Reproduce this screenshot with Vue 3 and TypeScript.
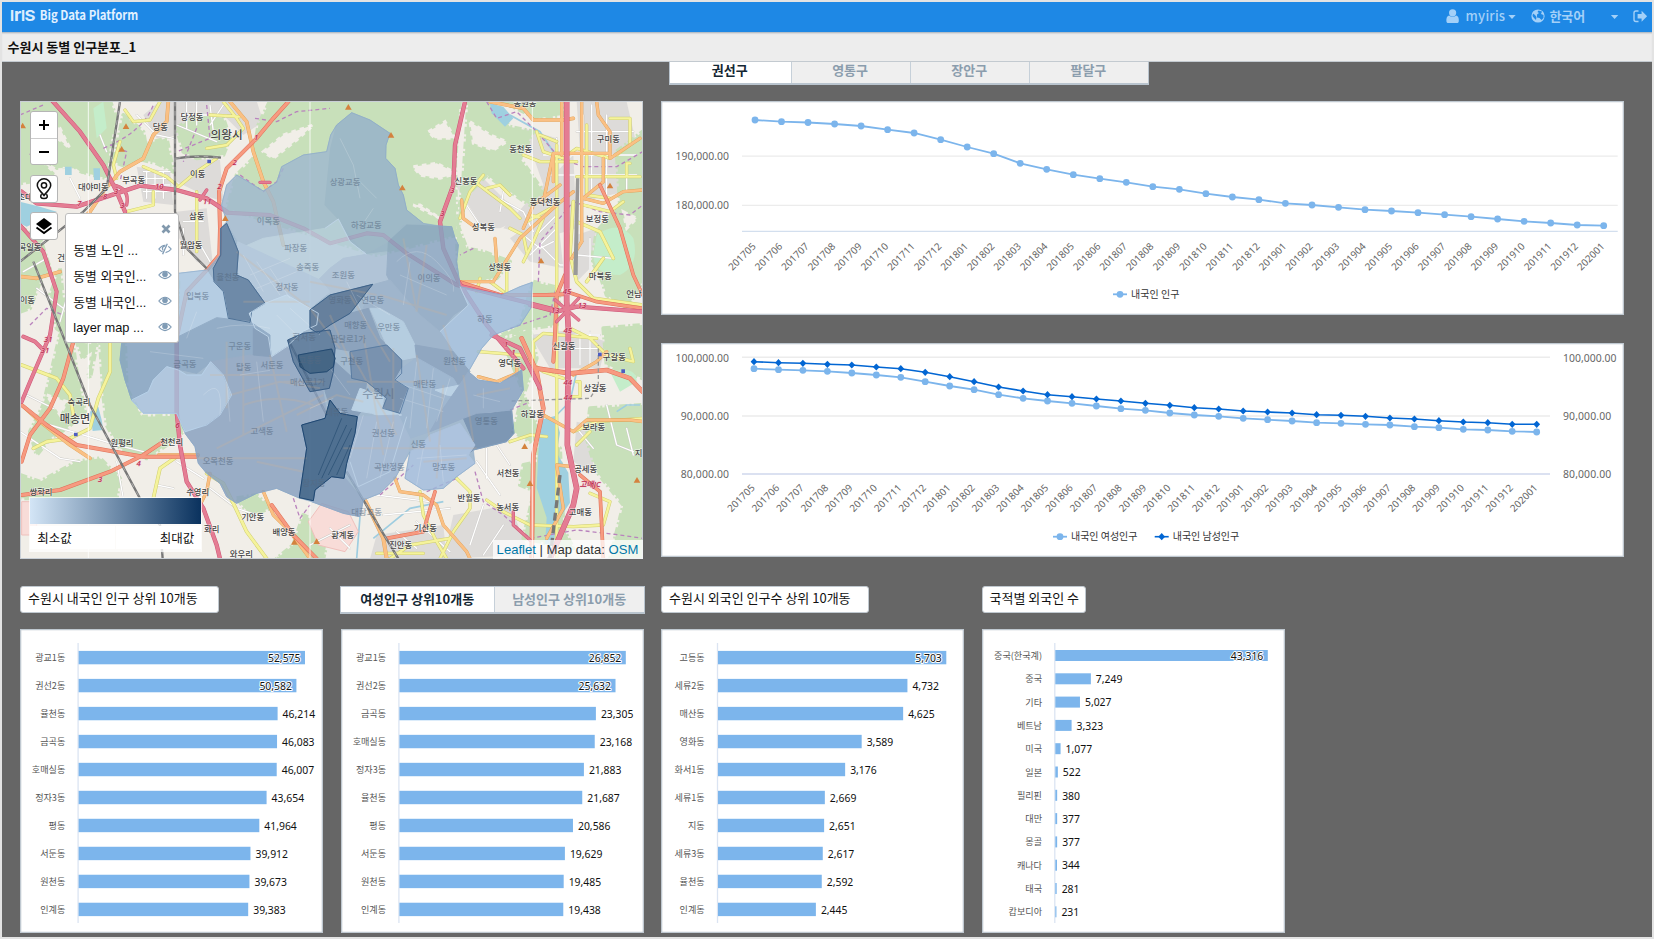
<script setup lang="ts">
interface Pt { x: number; y: number }
interface Bar { label: string; value: number }
interface Panel { bars: Bar[]; axis: number; full: number; top: number; pitch: number; thick: number }
interface Road { d: string; w: number }
interface MapLabel { t: string; x: number; y: number; s?: number }

/* ---------- line charts ---------- */
const months: string[] = []
for (let i = 0; i < 33; i++) {
  const m = 4 + i
  months.push(`${2017 + Math.floor(m / 12)}${String((m % 12) + 1).padStart(2, '0')}`)
}
const spread = (ys: number[], x0: number, x1: number): Pt[] =>
  ys.map((y, i) => ({ x: +(x0 + ((x1 - x0) * i) / (ys.length - 1)).toFixed(1), y }))
const toLine = (p: Pt[]): string => p.map(q => `${q.x},${q.y}`).join(' ')

const total = spread([
  19, 20.7, 21.5, 23, 25, 28.7, 32, 38.7, 46, 52.7, 62.3, 68.3, 73.7, 77.7, 81.3, 85.7, 88.3, 92.7, 96,
  98.7, 102.3, 104, 106.3, 108.7, 110, 111.7, 113.7, 115.7, 118, 120.3, 122, 124, 124.7,
], 94, 942.7)
const female = spread([
  101, 104, 106, 109, 114, 120, 127, 140, 153, 164, 179, 190, 198, 205, 213, 221, 226, 234, 240, 244, 250,
  254, 258, 263, 265, 268, 270, 275, 278, 283, 285, 289, 291,
].map(v => +(v / 3 - 8).toFixed(1)), 93, 875.7)
const male = spread([
  80, 83, 85, 88, 90, 96, 101, 112, 125, 140, 156, 168, 179, 185, 192, 198, 205, 211, 218, 222, 228, 231,
  234, 239, 241, 244, 249, 252, 257, 261, 263, 268, 268,
].map(v => +(v / 3 - 8).toFixed(1)), 93, 875.7)
const diamond = (p: Pt): string => `M${p.x} ${p.y - 3.6}l3.4 3.6-3.4 3.6-3.4-3.6z`

/* ---------- bar charts ---------- */
const mk = (names: string, values: number[]): Bar[] =>
  names.split(' ').map((label, i) => ({ label, value: values[i] }))
const panels: Panel[] = [
  { axis: 58.6, full: 226.4, top: 21.9, pitch: 27.98, thick: 13.4,
    bars: mk('광교1동 권선2동 율천동 금곡동 호매실동 정자3동 평동 서둔동 원천동 인계동',
      [52575, 50582, 46214, 46083, 46007, 43654, 41964, 39912, 39673, 39383]) },
  { axis: 58.4, full: 226.4, top: 21.9, pitch: 27.98, thick: 13.4,
    bars: mk('광교1동 권선2동 금곡동 호매실동 정자3동 율천동 평동 서둔동 원천동 인계동',
      [26852, 25632, 23305, 23168, 21883, 21687, 20586, 19629, 19485, 19438]) },
  { axis: 57, full: 228.3, top: 21.9, pitch: 27.98, thick: 13.4,
    bars: mk('고등동 세류2동 매산동 영화동 화서1동 세류1동 지동 세류3동 율천동 인계동',
      [5703, 4732, 4625, 3589, 3176, 2669, 2651, 2617, 2592, 2445]) },
  { axis: 73.3, full: 212.5, top: 21, pitch: 23.3, thick: 11,
    bars: mk('중국(한국계) 중국 기타 베트남 미국 일본 필리핀 대만 몽골 캐나다 태국 캄보디아',
      [43316, 7249, 5027, 3323, 1077, 522, 380, 377, 377, 344, 281, 231]) },
]
const barW = (p: Panel, b: Bar): number => (p.full * b.value) / p.bars[0].value
const inside = (p: Panel, b: Bar): boolean => p.axis + barW(p, b) > 270
const fmt = (n: number): string => n.toLocaleString('en-US')

/* ---------- map ---------- */
const city = 'M1025 53L1080 75 1140 115 1128 150 1127 190 1155 220 1165 270 1180 300 1190 345 1240 385 1290 393 1325 395 1335 430 1345 450 1340 500 1350 575 1475 600 1530 575 1567 562 1562 640 1530 690 1450 720 1415 760 1375 830 1405 855 1470 865 1535 825 1540 885 1505 945 1512 1015 1490 1040 1390 1065 1395 1105 1340 1145 1300 1180 1240 1185 1185 1150 1200 1070 1155 1150 1110 1195 1060 1215 1050 1265 1000 1255 905 1220 870 1210 800 1180 740 1195 680 1225 650 1205 630 1165 590 1135 565 1105 555 1055 525 1015 500 955 400 955 365 915 345 855 330 795 335 745 400 640 505 535 590 525 630 480 632 400 650 380 635 330 650 270 680 240 760 288 800 262 815 215 880 180 950 170 962 120 980 90z'
const forests = [
  'M30 18H300L320 70 300 150 290 250 230 235 160 215 120 250 30 265z',
  'M340 60L400 110 410 170 350 215 310 200z M392 150L470 130 490 230 440 205 380 190z',
  'M560 60L640 70 660 130 640 180 560 190 520 170 500 100z',
  'M780 18H1350L1335 200 1340 420 1100 480 650 340 680 240 730 190 745 90z',
  'M1375 18H1440L1500 95 1570 110 1550 150 1530 190 1600 290 1560 330 1500 290 1430 240 1372 300 1345 395 1370 460 1420 470 1500 500 1460 550 1345 560 1340 400 1360 250z',
  'M1470 18H1660V60L1580 70 1520 40z M1820 170L1898 110V560L1850 640 1790 600 1770 540 1745 500 1760 410 1830 330z',
  'M1570 560L1650 580 1640 690 1560 700 1460 730 1530 690z M1480 740L1560 700 1580 790 1540 900 1590 1010 1560 1040 1510 1010 1540 890z',
  'M270 740L345 740 350 880 395 965 500 962 520 1010 470 1050 410 1090 330 1060 290 990 280 900z',
  'M150 720H185L200 830 225 950 170 1000 120 1030 80 1080 60 1010 100 930z M200 740L260 750 240 850z',
  'M30 1140L90 1160 200 1100 270 1090 330 1150 320 1210H30z M470 600V520L505 560 500 720z',
  'M1590 1010L1650 1060 1660 1300 1690 1360 1540 1330 1570 1200z M1740 940L1898 930V1391H1800L1840 1230 1760 1130 1730 1030z',
  'M30 395L90 430 120 520 90 560 60 640 30 650z M150 520L170 720 140 700 120 600z M1780 700L1898 690V850L1790 810z',
  'M850 1350L880 1260 960 1300 940 1391H800z M680 1210L740 1200 780 1240 720 1260z M1540 1110L1590 1100 1580 1190 1530 1170z',
]
const valleys = [
  'M100 200l40 25 50-5 40 30 30 50-60-10-50-40z', 'M80 60l70 40 30 60-50-40z',
  'M760 170l60-50 90-30-50 45-70 55z', 'M1380 80l60 40 50 20-40 25-60-20z',
  'M1210 215l70-10 60 30-50 15-60-10z', 'M1255 110l50-30 30 50-60 0z', 'M1290 370l-80-40 20 0z',
  'M210 800l30-20-10 60z', 'M110 900l60 20-20 40z', 'M1840 350l40 20-30 30z',
]
const urban = [
  'M450 18H740L760 80 700 120 640 60 560 150 510 120 440 130 400 60z', 'M380 215L480 230 490 330 400 320z',
  'M500 190L630 195 640 320 580 300 500 260z', 'M500 350L590 340 610 520 560 500 500 420z',
  'M1540 100L1640 130 1650 240 1600 270z', 'M1570 300L1690 180 1700 400 1600 430 1480 400z',
  'M1700 20H1850L1880 150 1840 290 1720 320z', 'M1500 430L1640 330 1660 520 1560 500z',
  'M1330 260L1420 250 1540 370 1470 400 1420 400z', 'M1560 720L1680 705 1790 740 1770 820 1620 820z',
  'M1330 1260L1500 1230 1560 1380 1300 1391z', 'M1100 1320L1300 1290 1310 1391H1080z',
  'M1700 420L1760 400 1740 520 1700 560z', 'M1700 980L1790 1000 1740 1130 1690 1100z',
]
const water = [
  'M1590 975l45-12 15 50-10 60 35 60 5 90-40 60-10 65h-25l5-80-30-90z', 'M30 320l60 15 50 15-90 45-20-10z',
  'M240 950l25-15 10 40 5 30-32 3z', 'M1440 25l40 10 30 35-25 25-40-40z', 'M165 215h20v25h-20z M250 220h20v35h-18z',
]
const minor = [
  'M380 60l60 60 50 10 M400 230h80 M400 250h80 M400 270h80 M400 290h80 M410 230v80 M435 230v80 M460 230v80',
  'M510 60h140 M530 20v80 M560 20v70 M500 90l120 50 M600 30l10 80 M640 30l-40 60 M520 380h60 M520 400v80 M560 380v80',
  'M1600 180h280 M1720 60v240 M1745 30v260 M1790 60v240 M1700 110h170 M1620 240h260 M1640 130v140 M1850 210v80',
  'M1430 290l110 60 30 60 M1480 290l-10 60 M1540 420l50 40 40-20 M1370 330l40 60 M1580 420l60-60 M1560 480l80-80',
  'M1590 450l60 60h50 M1700 480l110 10 M1740 430v100 M1640 720h130 M1650 760h120 M1710 710v100 M1740 710v100',
  'M50 900l80 40 M30 1010l120 80 60 10 M120 990l200 60 80 20 M320 1100l20 110 M440 1170l50 10 M500 1100l80 50 M600 1180l80 60 60 20',
  'M1100 1200l160 20 M1120 1260l200-20 M1430 1060v90 M1400 1100l70 100 M1460 1050l40 60 M1420 1230l-40 120 M1480 1290l-60 90',
  'M1160 1310l60 50 M1220 1280l100 90 M900 1350l120-60 M960 1300l60 60 M1700 1000l50 60 M1790 930l30 120 50 20 M1850 1000l20 80',
  'M270 120l20 50 M560 430l40 70 M180 250l30 60 M200 500l-50 180 M80 580l80 60 M40 530l70-40',
]
const innerRoads = [
  'M680 470L900 640 990 760 M700 620h200 M600 840h240 M650 740v200 M700 760v260 M780 780L830 1010 M620 1060L940 900 M560 1090h330',
  'M1020 770L1160 1020 M1010 860h240 M1060 720l60 360 M1150 760v260 M1220 780l40 260 M1000 1060h400 M1300 870l-20 280 M1360 840l30 200',
  'M1110 600l200 60 M1180 430l40 220 M1250 450l-30 200 M1020 600l120 200 M1300 690l40 140 M900 560l200 40 M960 660l60 140 M820 860l120 0',
  'M860 960l120-60 80 20 M700 930c80-30 150-20 210 0 M660 900l150-40 120 20 M740 1100l140 30 M1400 900l100-20 M1240 1100l130-10',
]
const lanes = [
  'M700 480l60 110M740 500l70 100M780 520l60 90M720 540l120-50M740 580l120-50M650 860l10 120M740 800l20 180M690 840l90-14',
  'M1060 960l-40 130M1100 980l-30 170M1150 980l-40 170M1240 1060l-20 110M1290 1050l10 110M1220 1090l150-10M1220 800l-20 200',
  'M1270 820l-20 180M1320 850l-40 130M1180 870l120 40M1170 910l130 40M1160 500q60-60 120 0t50 90M1170 540l140 60M1200 500l-20 130',
  'M620 700q80-20 160 0M420 770l160 20M560 650l-30 80M580 900q60-60 50 60M1010 560l60 120M1040 600l100 60M1390 900l80 20M1420 880v60',
  'M840 640l90 80M800 660l60 60M960 820l60 80M900 940l70-30M990 130l40 80 20 100M1040 250l60 60M1090 340l-40 60',
]
const yellow: Road[] = [
  { d: 'M345 45L370 80 420 75 450 20 M330 140L310 210 320 250 M400 215L470 245 500 270', w: 8 },
  { d: 'M640 20L680 70 700 100 650 150 590 160 M600 60L690 65 M560 290V470 M500 280L560 230 620 190 M350 350L430 330 430 290', w: 8 },
  { d: 'M300 745L300 830 265 910 240 1000 180 1030 110 1040 70 1060 M35 810L140 850 180 900 190 960', w: 9 },
  { d: 'M500 1085L450 1120 430 1210 M590 1135L640 1165 670 1225 710 1310 770 1391', w: 9 },
  { d: 'M1580 110L1600 170 1660 190 1700 160 1800 190 M1540 180L1590 200H1700 M1640 150V260 1590 310 M1590 120L1640 140', w: 8 },
  { d: 'M1700 245H1890 M1850 240V205H1860 M1800 70H1860V150L1820 180 M1730 90V300L1800 310 M1720 330L1800 350 1840 320', w: 8 },
  { d: 'M1350 370L1380 290 1420 240 M1400 265L1500 340 1530 370 M1500 300L1470 270 1430 280 M1500 400L1540 420 1550 470', w: 8 },
  { d: 'M1550 380L1640 330 M1540 500L1570 440 1600 370 1560 360 M1490 520V590 M1410 550L1400 590 M1440 560L1480 590', w: 8 },
  { d: 'M1690 320L1680 480 1700 560 1750 610 1898 630 M1700 380L1770 410 1810 490 M1730 560L1780 490', w: 9 },
  { d: 'M1405 770L1530 780 1600 830 1660 850 M1570 810V740L1600 715 1760 730 M1680 700L1740 730 1790 780 1870 800 1860 760', w: 8 },
  { d: 'M1700 860H1710V905H1685 M1690 1010L1760 980 1898 970 M1700 1050L1740 1010 M1500 1040L1560 1020 1610 1025', w: 8 },
  { d: 'M1340 1150L1380 1190 1380 1240 1330 1310 1290 1391 M1430 1215L1480 1250 1560 1290 1690 1295 1780 1290 1800 1220 1740 1195', w: 8 },
  { d: 'M1230 1190L1240 1260 1280 1340 1310 1391 M1140 1391L1200 1350 1320 1330 M1100 1375H1240', w: 8 },
]
const orange: Road[] = [
  { d: 'M475 20L470 80 430 120 400 190 330 230 280 290 240 350 180 410', w: 10 },
  { d: 'M660 20L710 80 730 170 760 260 790 320 820 450', w: 10 },
  { d: 'M35 545L80 550 150 530 M35 930L90 980 180 1050 240 1090', w: 10 },
  { d: 'M445 1080H565 M600 1135L590 1190 570 1230 M760 1190L790 1260 840 1310 900 1391', w: 9 },
  { d: 'M1065 1215L1120 1330 1130 1391', w: 11 },
  { d: 'M1155 1150L1170 1190 1240 1200 1280 1230 1300 1290 1370 1370 1380 1391', w: 9 },
  { d: 'M1440 20L1540 40 1570 75 1660 75 1690 70', w: 10 },
  { d: 'M1655 20V180 M1715 20V440 M1760 20L1765 60 1800 110V190L1890 130 M1630 175H1800 M1630 175L1600 320', w: 9 },
  { d: 'M1780 190V260L1720 310 1780 325 1840 290 1898 285 M1630 180V260 M1690 290L1640 330 1530 430 1450 560 1348 560', w: 9 },
  { d: 'M1355 315L1360 370 1400 400 M1540 400L1570 330 1650 270 M1460 500L1455 430 M1715 440L1685 490', w: 9 },
  { d: 'M1405 845L1460 860 1520 835V815 M1600 960L1690 1010 1730 975 1860 975 1898 980', w: 9 },
  { d: 'M1690 1115L1640 1110 1660 1240 1610 1330 M1690 840L1760 800 1790 770', w: 9 },
]
const trunk: Road[] = [
  { d: 'M835 20L790 70 740 130 650 220 627 290 630 400 628 480 595 520 530 590 500 730', w: 11 },
  { d: 'M35 1100L60 1020 120 940 160 850 190 740 M35 930L110 990 200 1050 400 1085H560', w: 11 },
  { d: 'M35 1200L150 1185 300 1130 400 1080 460 1040 M785 1230L850 1320 920 1391', w: 11 },
  { d: 'M1345 560L1470 600 1610 600 1660 598 M1665 540L1640 600 1635 720 1630 800', w: 11 },
  { d: 'M1535 730L1580 830 1600 940 1570 1080 1565 1391 M1580 820L1680 835 1790 825 1860 850 1898 890', w: 13 },
  { d: 'M1770 270L1830 400 1870 540 1898 600 M1275 1190L1240 1310 1130 1330', w: 10 },
  { d: 'M1710 1140L1770 1190 1780 1391 M1670 590L1760 620 1898 640', w: 10 },
]
const motorway: Road[] = [
  { d: 'M125 15L210 110 280 210 320 290 345 350 M35 290L80 325 200 335 320 295 390 272 500 285 590 310 650 350', w: 13 },
  { d: 'M650 353L780 360 880 400 960 445 1070 415 1120 420 1190 475 1340 570 1420 590 1640 645', w: 12 },
  { d: 'M1365 20L1335 150 1330 270 1290 380 1300 460 1345 560 1430 690 1540 820', w: 13 },
  { d: 'M30 390L100 470 140 590 120 720 60 860 35 920 M40 725L75 740 100 765', w: 12 },
  { d: 'M500 720L500 950 510 1050 530 1160 580 1240 620 1350 630 1391', w: 13 },
  { d: 'M1670 20V620L1675 700 1672 1050 1700 1180 1690 1230 1620 1391', w: 17 },
  { d: 'M1560 630L1640 650 1700 635 1898 650 M1445 720L1530 760 1590 880', w: 13 },
  { d: 'M1510 1250V1290L1560 1335 M1636 615l70 60 M1706 610l-66 70 M570 315l20-30 M310 270q50 10 40 60 M750 262h30', w: 10 },
]
const rail = [
  'M330 20L290 280 220 350 30 500', 'M495 20V350L530 460 590 520', 'M498 190q60-10 135-2',
  'M70 500L150 700 240 930 395 1220 450 1290 458 1391', 'M1010 1130L1110 1300 1165 1391', 'M835 735L950 960',
]
const boundaries = [
  'M30 60L100 30 M60 180L90 100 120 90 M300 150L350 170 330 260 M280 160q120-50 150-130 M590 30L600 130 500 170 M560 100L520 200',
  'M735 70L800 80 860 50 960 40 M1430 20L1460 70 1520 50 1580 110 1650 190 1720 215 1820 215 1898 170',
  'M1585 560L1590 440 1640 380 1690 320 1770 350 1860 360 1898 330 M1390 460L1350 480 M1500 700L1560 680 1620 660 1640 570',
  'M820 220L800 260 760 290 690 240 M1395 1130L1420 1220 1480 1260 1560 1330 1700 1305 1830 1320 1898 1330 M1500 945l50-20',
  'M850 1210L870 1270 900 1230 M1110 1200l100-90 M1250 1190l90-40 M60 690L110 640 160 660',
]
const districts: { d: string; f: string }[] = [
  { f: '#9fb8cf', d: 'M635 330L650 270 680 240 760 288 800 262 815 215 880 180 950 170 962 120 980 90 1000 370 900 430 690 450 650 380z' },
  { f: '#96b1ca', d: 'M962 160L980 90 1025 53 1080 75 1140 115 1128 150 1127 190 1155 220 1165 270 1180 300 1190 345 1240 385 1180 390 1135 440 1065 478 985 372 945 330z' },
  { f: '#b2cbdc', d: 'M945 400L985 372 1020 440 1069 478 1000 490 960 520 930 560 690 460 760 430z' },
  { f: '#a3bcd4', d: 'M960 520L1000 490 1069 478 1135 470 1140 560 1085 570 960 600 900 580z' },
  { f: '#a9c2da', d: 'M683 440L930 555 960 590 900 640 850 610 765 625 715 555 680 540z' },
  { f: '#52759a', d: 'M650 385L665 420 685 470 680 540 715 555 765 625 725 650 720 682 655 670 640 590 612 560 610 520 632 480 632 400z' },
  { f: '#b6d0e6', d: 'M718 655L765 625 830 600 925 655 920 690 880 708 830 755 785 785 775 725 735 700z' },
  { f: '#86a3c1', d: 'M1135 440L1190 390 1325 395 1335 430 1345 450 1340 500 1350 570 1375 630 1330 660 1290 710 1230 660 1160 600 1130 540z' },
  { f: '#9bbadb', d: 'M1350 575L1475 600 1530 575 1567 562 1562 640 1530 690 1450 720 1415 760 1375 830 1330 770 1290 710 1375 630z' },
  { f: '#a9c6e2', d: 'M400 640L505 535 590 525 612 560 640 590 655 670 600 690 560 735 335 750z' },
  { f: '#7f9fc0', d: 'M335 745L505 725 620 668 720 680 780 720 780 785 720 790 605 800 560 835 470 815 430 860 415 900 365 915 345 855 330 795z' },
  { f: '#a3bfdc', d: 'M470 815L505 825 530 840 575 840 602 800 640 840 665 900 630 960 590 990 525 1010 500 955 400 955 365 915 415 890 430 855z' },
  { f: '#869fbf', d: 'M602 800L720 780 785 785 830 755 870 800 930 830 950 960 900 985 890 1060 870 1210 800 1180 740 1195 680 1225 650 1205 630 1165 590 1135 565 1105 555 1055 525 1015 590 990 630 960 665 900 640 840z' },
  { f: '#7290b2', d: 'M730 700L775 725 785 785 730 780z M945 888L975 800 1030 850 1070 860 1060 940 1042 965 960 935z' },
  { f: '#8ea9c6', d: 'M1085 570L1140 555 1230 660 1290 710 1330 770 1215 750 1180 680 1110 640 1060 640z' },
  { f: '#7693b4', d: 'M920 710L1020 655 1075 640 1110 730 1130 750 1030 770 975 760z' },
  { f: '#a9c6df', d: 'M1080 640L1110 640 1180 680 1215 750 1225 785 1175 795 1130 750z' },
  { f: '#48698d', d: 'M900 645L960 600 1088 568 1020 655 960 690 925 715 900 700z' },
  { f: '#496c92', d: 'M833 735L880 715 960 705 975 760 970 830 958 880 900 890 850 800z' },
  { f: '#204970', d: 'M865 780L920 770 965 762 975 790 970 815 950 830 900 835 870 815z' },
  { f: '#5f7fa3', d: 'M1020 770L1130 750 1175 795 1175 835 1155 855 1195 880 1170 955 1118 940 1130 910 1070 860 1025 850z' },
  { f: '#7b98b9', d: 'M1215 750L1330 770 1380 830 1345 870 1300 850 1220 790z' },
  { f: '#8eabcb', d: 'M1175 820L1220 788 1330 850 1345 875 1300 960 1260 1010 1200 1030 1165 960 1195 880 1155 855z' },
  { f: '#b0cce5', d: 'M1025 945L1050 880 1080 890 1120 905 1118 940 1175 960 1130 970 1085 955z M1275 885L1350 870 1345 905 1310 900z' },
  { f: '#6484a9', d: 'M1360 970L1400 955 1440 955 1505 945 1512 1015 1490 1040 1390 1065 1370 1080 1395 1050z' },
  { f: '#839fc1', d: 'M1375 830L1405 855 1470 865 1535 825 1540 885 1505 945 1400 955 1360 970 1260 1010 1300 940 1345 875z' },
  { f: '#9fbadc', d: 'M1185 1150L1200 1070 1230 1055 1260 1020 1350 985 1395 1050 1375 1080 1395 1105 1340 1145 1300 1180 1240 1185z' },
  { f: '#96b1d0', d: 'M1042 965L1165 960 1200 1030 1195 1070 1155 1150 1110 1195 1060 1215 1010 1130z' },
  { f: '#86a1c2', d: 'M1002 1145L1060 1215 1050 1265 1000 1255 905 1220 910 1190 960 1145z' },
  { f: '#2c557e', d: 'M875 990L945 970 960 915 990 955 1042 965 1035 1015 1010 1105 1002 1150 965 1145 915 1185 910 1217 868 1208 890 1060z' },
]
const outer: MapLabel[] = [
  { t: '당정동', x: 546, y: 67 }, { t: '당동', x: 451, y: 96 }, { t: '의왕시', x: 650, y: 120, s: 35 },
  { t: '이동', x: 563, y: 237 }, { t: '부곡동', x: 371, y: 256 }, { t: '대야미동', x: 250, y: 275 },
  { t: '초대', x: 45, y: 306 }, { t: '삼동', x: 560, y: 362 }, { t: '월암동', x: 543, y: 449 },
  { t: '곡일동', x: 60, y: 457 }, { t: '건', x: 153, y: 490 }, { t: '이동', x: 52, y: 616 },
  { t: '동원동', x: 1545, y: 25 }, { t: '동천동', x: 1532, y: 162 }, { t: '구미동', x: 1795, y: 132 },
  { t: '신봉동', x: 1368, y: 258 }, { t: '풍덕천동', x: 1605, y: 320 }, { t: '성복동', x: 1420, y: 396 },
  { t: '상현동', x: 1469, y: 517 }, { t: '보정동', x: 1762, y: 371 }, { t: '마북동', x: 1771, y: 544 },
  { t: '언남', x: 1872, y: 598 }, { t: '신갈동', x: 1662, y: 752 }, { t: '구갈동', x: 1813, y: 786 },
  { t: '영덕동', x: 1499, y: 803 }, { t: '상갈동', x: 1755, y: 880 }, { t: '하갈동', x: 1567, y: 958 },
  { t: '보라동', x: 1751, y: 997 }, { t: '지', x: 1886, y: 1073 }, { t: '서천동', x: 1494, y: 1134 },
  { t: '공세동', x: 1727, y: 1122 }, { t: '고매동', x: 1711, y: 1250 }, { t: '농서동', x: 1493, y: 1237 },
  { t: '반월동', x: 1377, y: 1210 }, { t: '기산동', x: 1246, y: 1300 }, { t: '진안동', x: 1172, y: 1350 },
  { t: '황계동', x: 998, y: 1321 }, { t: '숙곡리', x: 207, y: 921 }, { t: '매송면', x: 195, y: 972, s: 33 },
  { t: '원평리', x: 336, y: 1044 }, { t: '천천리', x: 485, y: 1040 }, { t: '쌍학리', x: 93, y: 1191 },
  { t: '수영리', x: 563, y: 1191 }, { t: '기안동', x: 728, y: 1267 }, { t: '배양동', x: 822, y: 1311 },
  { t: '와우리', x: 694, y: 1377 }, { t: '화리', x: 605, y: 1303 },
]
const inner: MapLabel[] = [
  { t: '이목동', x: 775, y: 379 }, { t: '파장동', x: 857, y: 458 }, { t: '송죽동', x: 893, y: 516 },
  { t: '율천동', x: 654, y: 546 }, { t: '입북동', x: 563, y: 603 }, { t: '정자동', x: 831, y: 576 },
  { t: '상광교동', x: 1005, y: 262 }, { t: '하광교동', x: 1069, y: 390 }, { t: '조원동', x: 1000, y: 540 },
  { t: '이의동', x: 1257, y: 550 }, { t: '영화동', x: 990, y: 614 }, { t: '연무동', x: 1088, y: 616 },
  { t: '매향동', x: 1037, y: 690 }, { t: '우만동', x: 1136, y: 695 }, { t: '하동', x: 1425, y: 672 },
  { t: '구운동', x: 689, y: 752 }, { t: '화서동', x: 883, y: 726 }, { t: '금곡동', x: 525, y: 806 },
  { t: '탑동', x: 701, y: 815 }, { t: '서둔동', x: 786, y: 810 }, { t: '고등동', x: 900, y: 796 },
  { t: '매산로1가', x: 893, y: 862 }, { t: '고색동', x: 756, y: 1008 }, { t: '오목천동', x: 624, y: 1098 },
  { t: '장지동', x: 912, y: 1164 }, { t: '팔달로1가', x: 1015, y: 732 }, { t: '구천동', x: 1025, y: 798 },
  { t: '원천동', x: 1334, y: 798 }, { t: '매탄동', x: 1244, y: 868 }, { t: '수원시', x: 1105, y: 897, s: 35 },
  { t: '세류동', x: 980, y: 952 }, { t: '권선동', x: 1120, y: 1015 }, { t: '신동', x: 1225, y: 1047 },
  { t: '영통동', x: 1429, y: 978 }, { t: '망포동', x: 1301, y: 1115 }, { t: '곡반정동', x: 1138, y: 1117 },
  { t: '대황교동', x: 1070, y: 1250 },
]
const shields: MapLabel[] = [
  { t: '10', x: 448, y: 273 }, { t: '11', x: 592, y: 320 }, { t: '7', x: 208, y: 325 }, { t: '8', x: 285, y: 305 },
  { t: '3', x: 318, y: 288 }, { t: '3', x: 337, y: 330 }, { t: '2', x: 674, y: 203 }, { t: '2', x: 628, y: 275 },
  { t: '1', x: 738, y: 128 }, { t: '3', x: 1327, y: 285 }, { t: '3', x: 1297, y: 355 }, { t: '45', x: 1671, y: 590 },
  { t: '13', x: 1636, y: 645 }, { t: '13', x: 1716, y: 632 }, { t: '45', x: 1673, y: 707 }, { t: '31', x: 115, y: 732 },
  { t: '31', x: 105, y: 767 }, { t: '6', x: 502, y: 990 }, { t: '4', x: 386, y: 1104 }, { t: '3', x: 270, y: 1154 },
  { t: '1', x: 1488, y: 748 }, { t: '1', x: 1510, y: 773 }, { t: '44', x: 1673, y: 861 }, { t: '44', x: 1674, y: 906 },
  { t: '고매JC', x: 1740, y: 1168 },
]
const peaks = [[348, 94], [335, 162], [38, 92], [1015, 36], [1143, 120], [1177, 278], [646, 370], [1800, 272],
  [1593, 497], [1544, 1054], [1560, 1165], [1881, 1155], [853, 1341], [920, 1339]]
const layers = [
  { name: '동별 노인 ...', off: true }, { name: '동별 외국인...', off: false },
  { name: '동별 내국인...', off: false }, { name: 'layer map ...', off: false },
]
const tabs = ['권선구', '영통구', '장안구', '팔달구']
</script>

<template>
  <div class="app">
    <header class="top">
      <svg class="brand" width="140" height="30" viewBox="0 0 140 30">
        <text y="18.500" class="logo"><tspan x="8">I</tspan><tspan x="12" font-size="18">r</tspan><tspan x="19">I</tspan></text>
        <text x="22.600" y="18.500" class="logo" textLength="11" lengthAdjust="spacingAndGlyphs">S</text>
        <text x="37.700" y="18" class="product" textLength="98.500" lengthAdjust="spacingAndGlyphs">Big Data Platform</text>
      </svg>
      <svg class="account" width="210" height="30" viewBox="1442 2 210 30">
        <g fill="#a3d0f8">
          <circle cx="1452.6" cy="12.8" r="3.6" />
          <path d="M1449 15.6c-2.200.5-2.800 3-2.600 5.600.100 1.300.9 1.900 2 1.900h8.400c1.100 0 1.900-.6 2-1.900.200-2.600-.4-5.100-2.600-5.600-2 1.600-5.200 1.600-7.200 0z" />
          <path d="M1508.300 15h7.400l-3.700 3.900zM1610.900 15h7.400l-3.700 3.900z" />
          <circle cx="1538" cy="16" r="6.600" />
          <text x="1465.600" y="20.600" textLength="39.500">myiris</text>
          <text x="1549.600" y="20.600" textLength="35.500" class="strong">한국어</text>
        </g>
        <path d="M1538.500 10.500l3.500 1-1 2.500 2.500 1v3l-2 2-2-2-2.500-.5v-3l2-1.500-1.500-1zM1533 13.500l2 1.500 1.500 2-.5 3-2-2-1.500-2z" fill="#1e88e5" />
        <g fill="none" stroke="#a3d0f8" stroke-width="1.400">
          <path d="M1638.500 11h-2.500q-2 0-2 2v6.500q0 2 2 2h2.500" />
        </g>
        <path d="M1637.600 14h4v-3.300l5.500 5.500-5.500 5.500v-3.300h-4z" fill="#a3d0f8" />
      </svg>
    </header>
    <div class="title">수원시 동별 인구분포_1</div>

    <main class="board">
      <nav class="tabs">
        <span v-for="(t, i) in tabs" :key="t" class="tab" :class="{ on: i === 0 }">{{ t }}</span>
      </nav>

      <section class="row">
        <div class="map">
          <svg width="623" height="458" viewBox="30 18 1869 1374">
            <rect x="30" y="18" width="1869" height="1374" fill="#f1eee8" />
            <path v-for="d in urban" :key="d" :d="d" fill="#dddbd9" />
            <path v-for="d in forests" :key="d" :d="d" fill="#c8e0ba" stroke="#c8e0ba" stroke-width="12" stroke-linejoin="round" stroke-dasharray="22 9 6 7" />
            <path v-for="d in valleys" :key="d" :d="d" fill="#f1eee8" stroke="#f1eee8" stroke-width="9" stroke-dasharray="14 12" />
            <path d="M1760 420q70-50 110 10 20 80-40 110-80 0-80-60zM1800 830q80-20 80 30l-50 30zM250 40l30-20 10 80-30 30z" fill="#c4edca" />
            <path v-for="d in water" :key="d" :d="d" fill="#9fd0e0" />
            <g fill="none" stroke="#9ecde0" stroke-width="5">
              <path d="M1050 1265L1040 1391M1090 1330L1200 1240 1300 1220M1700 830L1680 920 1640 960M1820 950l30-20 40 0M1500 60l90 50 60 90" />
            </g>
            <path d="M935 1225l80 25 30 60-40 60-80-20-30-70zM35 1220h45v100H35z" fill="#f8dcd8" stroke="#efc0bc" stroke-width="3" />
            <g fill="none" stroke-linejoin="round" stroke-linecap="round">
              <path v-for="d in minor" :key="d" :d="d" stroke="#c9c7c4" stroke-width="6" />
              <path v-for="d in minor" :key="d + 'w'" :d="d" stroke="#fff" stroke-width="4" />
              <path v-for="d in boundaries" :key="d" :d="d" stroke="#b983bd" stroke-width="4" stroke-dasharray="12 9" stroke-linecap="butt" />
              <path v-for="r in yellow" :key="r.d" :d="r.d" stroke="#cfcd72" :stroke-width="r.w + 2" />
              <path v-for="r in yellow" :key="r.d + 'f'" :d="r.d" stroke="#f5f39b" :stroke-width="r.w - 1" />
              <path v-for="r in orange" :key="r.d" :d="r.d" stroke="#dc9f57" :stroke-width="r.w + 1" />
              <path v-for="r in orange" :key="r.d + 'f'" :d="r.d" stroke="#fac084" :stroke-width="r.w - 1" />
              <path v-for="r in trunk" :key="r.d" :d="r.d" stroke="#dd7058" :stroke-width="r.w + 1" />
              <path v-for="r in trunk" :key="r.d + 'f'" :d="r.d" stroke="#f79a80" :stroke-width="r.w - 2" />
              <path v-for="r in motorway" :key="r.d" :d="r.d" stroke="#cd5577" :stroke-width="r.w" />
              <path v-for="r in motorway" :key="r.d + 'f'" :d="r.d" stroke="#e47d93" :stroke-width="r.w - 3" />
            </g>
            <g fill="none" stroke-width="7">
              <path v-for="d in rail" :key="d" :d="d" stroke="#777" />
              <path v-for="d in rail" :key="d + 'w'" :d="d" stroke="#aaa" stroke-width="3" stroke-dasharray="14 14" />
              <path d="M1650 1140L1620 1391" stroke="#777" stroke-width="10" stroke-dasharray="24 14" />
              <path d="M1505 918L1740 910 1765 870V750" stroke="#999" stroke-width="4" stroke-dasharray="12 8" />
            </g>
            <path d="M1698 250h10l-5 290h-13z" fill="#999" />
            <path d="M235 18v1374M900 18v1374M1567 18v1374" stroke="#fff" stroke-width="3" fill="none" opacity=".8" />
            <g opacity=".82">
              <path :d="city" fill="#93afca" />
              <path v-for="z in districts" :key="z.d" :d="z.d" :fill="z.f" :stroke="z.f" stroke-width="3" stroke-linejoin="round" />
            </g>
            <g fill="none">
              <g stroke="#dcb48c" stroke-width="6" opacity=".2"><path v-for="d in innerRoads" :key="d" :d="d" /></g>
              <g stroke="#fff" stroke-width="3" opacity=".18"><path v-for="d in lanes" :key="d" :d="d" /></g>
            </g>
            <g fill="none" stroke-width="2.500" stroke-linejoin="round">
              <path :d="city" stroke="#8aa8c8" opacity=".7" />
              <path :d="districts[5].d" stroke="#45698f" />
              <path :d="districts[6].d" stroke="#c5dbee" />
              <path :d="districts[11].d" stroke="#b8d2ea" />
              <path :d="districts[17].d" stroke="#345b85" />
              <path :d="districts[18].d" stroke="#315781" />
              <path :d="districts[19].d" stroke="#1d456d" />
              <path :d="districts[20].d" stroke="#5478a0" />
              <path :d="districts[29].d" stroke="#143f6c" />
              <path d="M945 400L985 372 1020 440 1069 478M1350 575L1375 630 1290 710M1020 1100l25 75 95-45 50-165" stroke="#bed4e8" />
              <path d="M925 1140l70-170M935 1150l75-160M955 1140l70-140M980 1140l40-90" stroke="#183f66" stroke-width="3" opacity=".5" />
            </g>
            <g class="names in">
              <text v-for="l in inner" :key="l.t" :x="l.x" :y="l.y + (l.s ?? 25) * 0.36" :font-size="l.s ?? 25">{{ l.t }}</text>
            </g>
            <g class="names">
              <text v-for="l in outer" :key="l.t + l.x" :x="l.x" :y="l.y + (l.s ?? 25) * 0.36" :font-size="l.s ?? 25">{{ l.t }}</text>
            </g>
            <g class="names ref">
              <text v-for="l in shields" :key="l.t + l.x" :x="l.x" :y="l.y + 8" font-size="23">{{ l.t }}</text>
            </g>
            <path v-for="p in peaks" :key="p[0]" :d="`M${p[0]} ${p[1] - 9}l10 17h-20z`" fill="#d4823e" />
            <path d="M592 194h11v11h-11zM192 1013h11v11h-11zM1764 773h11v11h-11zM1834 823h11v11h-11z" fill="#4d5cc0" />
            <rect x="31.500" y="19.500" width="1866" height="1371" fill="none" stroke="#c9cfd6" stroke-width="3" />
          </svg>

          <div class="controls">
            <div class="zoom">
              <span class="btn"><svg width="12" height="12" viewBox="0 0 12 12"><path d="M6 1v10M1 6h10" stroke="#000" stroke-width="2" /></svg></span>
              <span class="btn"><svg width="12" height="12" viewBox="0 0 12 12"><path d="M1 6h10" stroke="#000" stroke-width="2" /></svg></span>
            </div>
            <span class="btn solo">
              <svg width="18" height="22" viewBox="0 0 18 22" fill="none" stroke="#111" stroke-width="1.500">
                <path d="M9 17.500C6.500 14 2.300 11 2.300 7.300a6.700 6.500 0 0 1 13.400 0C15.700 11 11.500 14 9 17.500z" />
                <circle cx="9" cy="7.300" r="2.600" />
                <path d="M6.500 16.200c-1.600 2.600-.8 4.300 2.500 4.300s4.100-1.700 2.500-4.300" />
              </svg>
            </span>
            <span class="btn solo gap">
              <svg width="18" height="18" viewBox="0 0 18 18"><path d="M9 1l8 6-8 6-8-6z" /><path d="M1.500 10.500L9 16l7.500-5.500" fill="none" stroke="#000" stroke-width="1.900" /></svg>
            </span>
          </div>

          <div class="layers">
            <svg class="close" width="10" height="10" viewBox="0 0 10 10"><path d="M1.500 1.500l7 7M8.500 1.500l-7 7" stroke="#8299ad" stroke-width="2.700" /></svg>
            <div v-for="l in layers" :key="l.name" class="layer">
              <span>{{ l.name }}</span>
              <svg width="14" height="12" viewBox="0 0 14 12" fill="none" stroke="#7f9bb5">
                <path d="M.8 6Q7-1.600 13.200 6 7 13.200.8 6z" stroke-width="1.100" />
                <circle v-if="!l.off" cx="7" cy="5.400" r="2.400" fill="#7f9bb5" />
                <template v-else>
                  <path d="M7.800 3.200a2.600 2.600 0 0 0-3.400 2.500l1 2" stroke-width="1.300" />
                  <path d="M10 .5L5 11.500" stroke="#fff" stroke-width="3" /><path d="M9.300.8L4.600 11.200" stroke-width="1.300" />
                </template>
              </svg>
            </div>
          </div>

          <div class="legend">
            <div class="ramp"></div>
            <div class="ends"><span>최소값</span><span>최대값</span></div>
          </div>
          <div class="credit"><a>Leaflet</a> | Map data: <a>OSM</a></div>
        </div>

        <div class="charts">
          <div class="card line">
            <svg width="963" height="214" viewBox="0 0 963 214">
              <path d="M81 55.200h875.700M81 104.300h875.700" stroke="#ececec" stroke-width="1.300" />
              <path d="M81 130.400h875.700" stroke="#d3dfee" stroke-width="1.200" />
              <text class="axis" x="14.500" y="59.300" textLength="53.500">190,000.00</text>
              <text class="axis" x="14.500" y="107.500" textLength="53.500">180,000.00</text>
              <polyline :points="toLine(total)" class="light" />
              <circle v-for="p in total" :key="p.x" :cx="p.x" :cy="p.y" r="3.400" fill="#7cb5ec" />
              <text v-for="(m, i) in months" :key="m" class="month" :transform="`translate(${total[i].x + 1.5} 146) rotate(-45)`">{{ m }}</text>
              <path d="M452 193.300h14" class="light" /><circle cx="459" cy="193.300" r="3.400" fill="#7cb5ec" />
              <text class="key" x="470" y="197" textLength="48.500">내국인 인구</text>
            </svg>
          </div>
          <div class="card line">
            <svg width="963" height="214" viewBox="0 0 963 214">
              <path d="M81 14.200h808M81 73h808" stroke="#ececec" stroke-width="1.500" />
              <path d="M81 131h808" stroke="#dbe1f1" stroke-width="1.800" />
              <text class="axis" x="14.500" y="18.600" textLength="53.500">100,000.00</text>
              <text class="axis" x="19.800" y="76.900" textLength="48.200">90,000.00</text>
              <text class="axis" x="19.800" y="135" textLength="48.200">80,000.00</text>
              <text class="axis" x="902" y="18.600" textLength="53.500">100,000.00</text>
              <text class="axis" x="902" y="76.900" textLength="48.200">90,000.00</text>
              <text class="axis" x="902" y="135" textLength="48.200">80,000.00</text>
              <polyline :points="toLine(female)" class="light" />
              <circle v-for="p in female" :key="p.x" :cx="p.x" :cy="p.y" r="3.400" fill="#7cb5ec" />
              <polyline :points="toLine(male)" class="deep" />
              <path v-for="p in male" :key="p.x" :d="diamond(p)" fill="#0266d3" />
              <text v-for="(m, i) in months" :key="m" class="month" :transform="`translate(${male[i].x + 1.5} 145.500) rotate(-45)`">{{ m }}</text>
              <path d="M392 193.700h14" class="light" /><circle cx="399" cy="193.700" r="3.400" fill="#7cb5ec" />
              <text class="key" x="410" y="197.300" textLength="66.500">내국인 여성인구</text>
              <path d="M493.700 193.700h14" class="deep" /><path :d="diamond({ x: 500.700, y: 193.700 })" fill="#0266d3" />
              <text class="key" x="511.700" y="197.300" textLength="66.500">내국인 남성인구</text>
            </svg>
          </div>
        </div>
      </section>

      <section class="heads">
        <div class="cell"><span class="tag w1">수원시 내국인 인구 상위 10개동</span></div>
        <div class="cell">
          <div class="pair"><span class="half on">여성인구 상위10개동</span><span class="half">남성인구 상위10개동</span></div>
        </div>
        <div class="cell"><span class="tag w3">수원시 외국인 인구수 상위 10개동</span></div>
        <div class="cell"><span class="tag w4">국적별 외국인 수</span></div>
      </section>

      <section class="bars">
        <div v-for="(p, k) in panels" :key="k" class="card bar">
          <svg width="303" height="304" viewBox="0 0 303 304">
            <path :d="`M${p.axis - 0.5} 14v280`" stroke="#dbe4f2" stroke-width="1.300" />
            <g v-for="(b, i) in p.bars" :key="b.label">
              <rect :x="p.axis" :y="p.top + p.pitch * i" :width="barW(p, b)" :height="p.thick" fill="#7cb5ec" />
              <text class="cat" :x="p.axis - 13.300" :y="p.top + p.pitch * i + p.thick / 2 + 3.500">{{ b.label }}</text>
              <text v-if="inside(p, b)" class="val in" :x="p.axis + barW(p, b) - 4.500" :y="p.top + p.pitch * i + p.thick / 2 + 4.200">{{ fmt(b.value) }}</text>
              <text v-else class="val" :x="p.axis + barW(p, b) + 5" :y="p.top + p.pitch * i + p.thick / 2 + 4.200">{{ fmt(b.value) }}</text>
            </g>
          </svg>
        </div>
      </section>
    </main>
  </div>
</template>

<style>
body { margin: 0; background: #e6e6e6; overflow: hidden; }
</style>

<style scoped>
.app {
  box-sizing: border-box; width: 1654px; height: 939px; border: 2px solid #e3e3e3; background: #666;
  font-family: "Noto Sans CJK KR", sans-serif; color: #111; overflow: hidden;
}
svg { display: block; flex: none; }
.top { height: 30px; background: #1e88e5; display: flex; justify-content: space-between; }
.brand { overflow: visible; }
.logo { font: 700 14.500px Inter, sans-serif; fill: #dcedfd; }
.product { font: 700 13px "Noto Sans CJK KR", sans-serif; fill: #e2f1ff; }
.account text { font: 500 13px "Noto Sans CJK KR", sans-serif; fill: #a3d0f8; }
.account .strong { font-weight: 700; }
.title {
  box-sizing: border-box; height: 30px; padding-left: 5.500px; background: #ededed;
  border-top: 1px solid #b6bfc7; border-bottom: 1px solid #c3cad0;
  font-weight: 700; font-size: 13px; line-height: 27px; box-shadow: inset 0 1px 1px #d5d8db;
}
.board { display: flex; flex-direction: column; }
.tabs {
  display: flex; box-sizing: border-box; width: 480px; height: 23px; margin-left: 667px;
  border: 1px solid #b9c4ce; border-top: 0; border-bottom-width: 2px; background: #efefef;
}
.tab {
  flex: 1; text-align: center; font-size: 13px; font-weight: 700; line-height: 16px; color: #8b9dad;
  border-left: 1px solid #c6d0d9; text-indent: -1px;
}
.tab.on { background: #fff; color: #142733; border-left: 0; flex: 1.020; }
.row { display: flex; gap: 18px; margin: 16px 0 0 18.300px; height: 458px; }
.map { position: relative; width: 623px; height: 458px; overflow: hidden; }
.charts { display: flex; flex-direction: column; gap: 28px; }
.card { background: #fff; box-shadow: inset 0 0 0 1.300px #bfc8d0; }
.line { width: 963px; height: 214px; }
.names { text-anchor: middle; font-family: "Noto Sans CJK KR", sans-serif; font-weight: 500; fill: #444; stroke: #fff; stroke-width: 3px; stroke-opacity: .7; paint-order: stroke; }
.names.in { fill: #566a82; stroke: none; opacity: .55; }
.names.ref { fill: #b8284c; font-style: italic; font-family: "Noto Sans", "Noto Sans CJK KR", sans-serif; stroke: #f4b6c4; }
.controls { position: absolute; left: 10px; top: 10px; }
.btn { display: flex; align-items: center; justify-content: center; width: 26px; height: 26px; background: #fff; }
.zoom { width: 26px; border: 1px solid #b5b5b5; border-radius: 3px; overflow: hidden; background: #ccc; display: flex; flex-direction: column; }
.zoom .btn + .btn { box-sizing: border-box; border-top: 1px solid #ccc; }
.solo { margin-top: 10px; border: 1px solid #b5b5b5; border-radius: 3px; }
.gap { margin-top: 9px; }
.layers {
  position: absolute; left: 45px; top: 112px; box-sizing: border-box; width: 114px; height: 130px;
  padding: 10px 7px 0 7px; background: #fff; border: 1px solid #bdbdbd; border-radius: 3px;
}
.close { margin: 0 0 2px auto; }
.layer {
  display: flex; align-items: center; justify-content: space-between; height: 26px;
  font: 12.800px "Liberation Sans", "Noto Sans CJK KR", sans-serif; color: #111; white-space: nowrap;
}
.layer svg { margin-right: -1px; }
.legend { position: absolute; left: 9px; top: 395.500px; width: 173px; height: 55px; background: rgba(255, 255, 255, .75); }
.ramp { margin: 1px; height: 26px; background: linear-gradient(90deg, #d3e5f6, #0a325e); }
.ends { display: flex; gap: 1px; margin: 2px 1px 0; font-size: 12.500px; line-height: 23px; }
.ends span { flex: 1; background: #fff; padding: 0 7px; }
.ends span:last-child { text-align: right; }
.credit {
  position: absolute; right: 0; bottom: 0; padding: 0 5px 0 4px; background: rgba(255, 255, 255, .75);
  font: 13.100px/19px "Liberation Sans", sans-serif; color: #333; white-space: nowrap;
}
.credit a { color: #0078a8; }
.axis { font: 10.400px "Noto Sans", sans-serif; fill: #666; }
.month { font: 9.900px "Noto Sans", sans-serif; fill: #666; text-anchor: end; }
.key { font: 400 10px "Noto Sans CJK KR", sans-serif; fill: #333; }
.light { fill: none; stroke: #7cb5ec; stroke-width: 1.800; }
.deep { fill: none; stroke: #0266d3; stroke-width: 1.600; }
.heads { display: grid; grid-template-columns: repeat(4, 303px); column-gap: 17.500px; margin: 27px 0 0 18px; height: 43px; }
.cell { display: flex; align-items: flex-start; }
.tag {
  box-sizing: border-box; height: 27px; padding-left: 7px; border: 1px solid #c0c8cf; border-radius: 3px;
  background: #fff; font-size: 13px; line-height: 22px; white-space: nowrap;
}
.w1 { width: 199px; }
.w3 { width: 208px; }
.w4 { width: 104px; }
.pair { display: flex; box-sizing: border-box; width: 305px; height: 28px; margin: 0 -1px; flex: none; border: 1px solid #b9c4ce; border-bottom-width: 2px; }
.half { flex: 1; text-align: center; font-size: 13px; font-weight: 700; line-height: 24px; background: #efefef; color: #8b9dad; border-left: 1px solid #c6d0d9; white-space: nowrap; }
.half.on { background: #fff; color: #142733; border: 0; flex: 1.030; }
.bars { display: grid; grid-template-columns: repeat(4, 303px); column-gap: 17.500px; margin-left: 18px; }
.bar { height: 304px; }
.cat { font: 9.100px "Noto Sans CJK KR", sans-serif; fill: #555; text-anchor: end; }
.val { font: 10.400px "Noto Sans", sans-serif; fill: #111; }
.val.in { text-anchor: end; stroke: #fff; stroke-width: 2px; paint-order: stroke; stroke-linejoin: round; }
</style>
